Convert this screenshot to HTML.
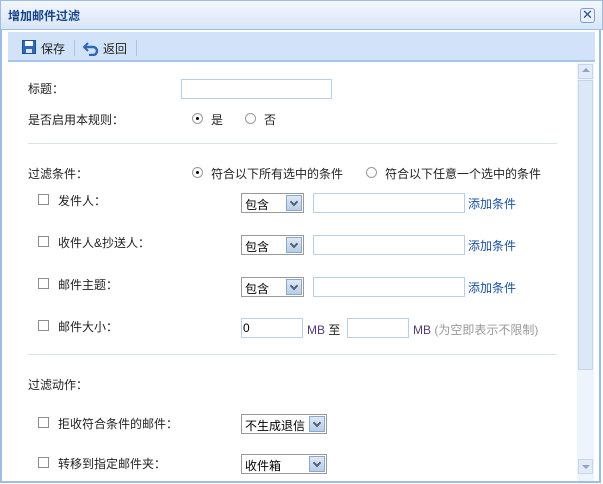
<!DOCTYPE html>
<html><head><meta charset="utf-8"><style>
*{margin:0;padding:0;box-sizing:border-box}
body{width:603px;height:484px;background:#fff;font:12px "Liberation Sans","Noto Sans CJK SC",sans-serif;color:#222;position:relative;overflow:hidden}
.a{position:absolute;white-space:nowrap}
.win{position:absolute;left:0;top:0;width:601px;height:483px;border:2px solid #9fbde0;border-top:1px solid #9fbde0;background:#fff}
.title{position:absolute;left:0;top:0;width:603px;height:30px;background:linear-gradient(#f3f7fd,#d9e6f7);border:1px solid #9fbde0}
.tb{position:absolute;left:8px;top:32px;width:587px;height:30px;background:#d2e3f9;border-bottom:2px solid #a9c6ea}
.inp{position:absolute;height:20px;border:1px solid #b9cfe6;background:#fff}
.sel{position:absolute;height:20px;border:1px solid #999;background:#fff;padding:2px 3px;font-size:12px;color:#000}
.sel i{position:absolute;right:1px;top:1px;width:16px;height:16px;background:linear-gradient(#dfe9f6,#b9cde8);border:1px solid #8aa7cc}
.sel i:after{content:"";position:absolute;left:4px;top:3px;width:4px;height:4px;border-right:2px solid #4d5e78;border-bottom:2px solid #4d5e78;transform:rotate(45deg)}
.cb{position:absolute;width:11px;height:11px;border:1px solid #8d8d8d;background:#fff}
.rd{position:absolute;width:11px;height:11px;border:1px solid #999;border-radius:50%;background:#fff}
.rd.on:after{content:"";position:absolute;left:3px;top:3px;width:3px;height:3px;background:#000;border-radius:50%}
.hr{position:absolute;left:28px;width:529px;height:1px;background:#d7e3ef}
.lk{color:#1a4f9c}
</style></head><body>
<div class="win"></div>
<div class="title"></div>
<div class="a" style="left:8px;top:7px;font-weight:bold;color:#15428b;font-size:12px">增加邮件过滤</div>
<div class="a" style="left:580px;top:8px;width:15px;height:15px;border:1px solid #7e9fd0;border-radius:3px;background:#eaf1fb;color:#274f8f;font-size:13px;line-height:12px;text-align:center">✕</div>
<div class="tb"></div>
<svg class="a" style="left:22px;top:40px" width="14" height="14"><rect x="0.5" y="0.5" width="13" height="13" fill="#2f69b5" stroke="#1d4f93"/><rect x="3" y="1" width="8" height="5" fill="#fff"/><rect x="4" y="9" width="6" height="4" fill="#d8e4f4"/></svg>
<div class="a" style="left:41px;top:40px">保存</div>
<div class="a" style="left:74px;top:40px;width:1px;height:16px;background:#a9c6ea"></div>
<svg class="a" style="left:83px;top:40px" width="16" height="16"><path d="M5 3 L1 7 L5 11" fill="none" stroke="#2f69b5" stroke-width="2"/><path d="M2 7 H10 A4 4 0 0 1 10 15 H6" fill="none" stroke="#2f69b5" stroke-width="2.5"/></svg>
<div class="a" style="left:103px;top:40px">返回</div>
<div class="a" style="left:136px;top:40px;width:1px;height:16px;background:#a9c6ea"></div>
<div class="a" style="left:577px;top:63px;width:17px;height:418px;background:#eef4fc"></div>
<div class="a" style="left:578px;top:64px;width:15px;height:15px;background:#e2ebf7;border:1px solid #c6d6ea"></div>
<div class="a" style="left:582px;top:68px;border:4px solid transparent;border-bottom:4px solid #8ea5c4;border-top:0"></div>
<div class="a" style="left:578px;top:80px;width:15px;height:290px;background:#dce8f8;border:1px solid #c6d6ea"></div>
<div class="a" style="left:578px;top:459px;width:15px;height:15px;background:#e2ebf7;border:1px solid #c6d6ea"></div>
<div class="a" style="left:582px;top:465px;border:4px solid transparent;border-top:4px solid #8ea5c4;border-bottom:0"></div>

<div class="a" style="left:28px;top:80px">标题：</div>
<div class="inp" style="left:181px;top:79px;width:151px"></div>
<div class="a" style="left:28px;top:111px">是否启用本规则：</div>
<div class="rd on" style="left:192px;top:113px"></div><div class="a" style="left:211px;top:111px">是</div>
<div class="rd" style="left:245px;top:113px"></div><div class="a" style="left:264px;top:111px">否</div>
<div class="hr" style="top:143px"></div>
<div class="a" style="left:28px;top:165px">过滤条件：</div>
<div class="rd on" style="left:192px;top:167px"></div><div class="a" style="left:211px;top:165px">符合以下所有选中的条件</div>
<div class="rd" style="left:366px;top:167px"></div><div class="a" style="left:385px;top:165px">符合以下任意一个选中的条件</div>

<div class="cb" style="left:38px;top:194px"></div><div class="a" style="left:58px;top:192px">发件人：</div>
<div class="sel" style="left:241px;top:193px;width:63px">包含<i></i></div>
<div class="inp" style="left:313px;top:193px;width:152px"></div><div class="a lk" style="left:468px;top:195px">添加条件</div>

<div class="cb" style="left:38px;top:236px"></div><div class="a" style="left:58px;top:234px">收件人&amp;抄送人：</div>
<div class="sel" style="left:241px;top:235px;width:63px">包含<i></i></div>
<div class="inp" style="left:313px;top:235px;width:152px"></div><div class="a lk" style="left:468px;top:237px">添加条件</div>

<div class="cb" style="left:38px;top:278px"></div><div class="a" style="left:58px;top:276px">邮件主题：</div>
<div class="sel" style="left:241px;top:277px;width:63px">包含<i></i></div>
<div class="inp" style="left:313px;top:277px;width:152px"></div><div class="a lk" style="left:468px;top:279px">添加条件</div>

<div class="cb" style="left:38px;top:320px"></div><div class="a" style="left:58px;top:318px">邮件大小：</div>
<div class="inp" style="left:241px;top:318px;width:62px;padding:2px 1px;color:#000">0</div>
<div class="a" style="left:307px;top:321px;color:#553a7a">MB <span style="color:#222">至</span></div>
<div class="inp" style="left:347px;top:318px;width:62px"></div>
<div class="a" style="left:413px;top:321px;color:#553a7a">MB <span style="color:#999">(为空即表示不限制)</span></div>
<div class="hr" style="top:354px"></div>
<div class="a" style="left:28px;top:376px">过滤动作：</div>
<div class="cb" style="left:38px;top:417px"></div><div class="a" style="left:58px;top:415px">拒收符合条件的邮件：</div>
<div class="sel" style="left:241px;top:414px;width:86px">不生成退信<i></i></div>
<div class="cb" style="left:38px;top:457px"></div><div class="a" style="left:58px;top:455px">转移到指定邮件夹：</div>
<div class="sel" style="left:241px;top:454px;width:86px">收件箱<i></i></div>
</body></html>
